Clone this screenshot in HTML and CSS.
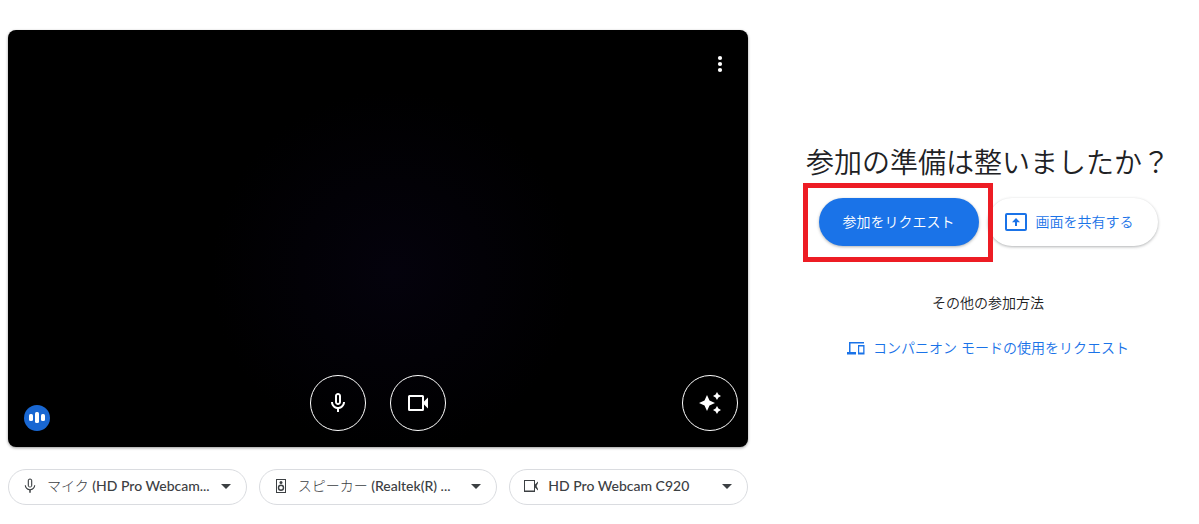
FILE: index.html
```html
<!DOCTYPE html>
<html lang="ja">
<head>
    <meta charset="UTF-8">
    <meta name="viewport" content="width=device-width, initial-scale=1.0">
    <title>参加の準備</title>
    <link rel="stylesheet" href="styles.css">
</head>
<body>
    <main class="lobby">
        <section class="preview">
            <div class="video">
                <div class="video-top">
                    <button type="button" class="more" aria-label="その他のオプション">
                        <svg width="24" height="24" viewBox="0 0 24 24"><circle cx="12" cy="6" r="2.1"/><circle cx="12" cy="12" r="2.1"/><circle cx="12" cy="18" r="2.1"/></svg>
                    </button>
                </div>
                <div class="video-bottom">
                    <div class="level">
                        <svg width="26" height="26" viewBox="0 0 26 26"><rect x="5" y="9" width="4" height="7" rx="1.500"/><rect x="11" y="7" width="4" height="11" rx="1.500"/><rect x="17" y="9" width="4" height="7" rx="1.500"/></svg>
                    </div>
                    <div class="toggles">
                        <button type="button" class="round" aria-label="マイク">
                            <svg width="24" height="24" viewBox="0 0 24 24"><path d="M12 14c1.66 0 3-1.34 3-3V5c0-1.66-1.34-3-3-3S9 3.34 9 5v6c0 1.66 1.34 3 3 3zm-1-9c0-.55.45-1 1-1s1 .45 1 1v6c0 .55-.45 1-1 1s-1-.45-1-1V5zm6 6c0 2.76-2.24 5-5 5s-5-2.24-5-5H5c0 3.53 2.61 6.43 6 6.92V21h2v-3.08c3.39-.49 6-3.39 6-6.92h-2z"/></svg>
                        </button>
                        <button type="button" class="round" aria-label="カメラ">
                            <svg width="24" height="24" viewBox="0 0 24 24"><path d="M18 10.500V5.500a1.500 1.500 0 0 0-1.500-1.500h-13A1.500 1.500 0 0 0 2 5.500v13A1.500 1.500 0 0 0 3.500 20h13a1.500 1.500 0 0 0 1.500-1.500v-5l4 4v-11l-4 4zM16 18H4V6h12v12z"/></svg>
                        </button>
                    </div>
                    <button type="button" class="round effects" aria-label="視覚効果">
                        <svg width="24" height="24" viewBox="0 0 24 24"><path d="M9 4l2.500 5.500L17 12l-5.500 2.500L9 20l-2.500-5.500L1 12l5.500-2.500zM19 1l1.400 2.600L23 5l-2.600 1.400L19 9l-1.400-2.600L15 5l2.600-1.400zM19 15l1.400 2.600L23 19l-2.600 1.400L19 23l-1.400-2.600L15 19l2.600-1.400z"/></svg>
                    </button>
                </div>
            </div>

            <form class="devices">
                <label class="device" for="mic">
                    <svg width="18" height="18" viewBox="0 0 24 24"><path d="M12 14c1.660 0 3-1.340 3-3V5c0-1.660-1.340-3-3-3S9 3.340 9 5v6c0 1.660 1.340 3 3 3zm-1.500-10.500h3v9h-3zM17.500 11c0 3-2.500 5.200-5.500 5.200S6.500 14 6.500 11H5c0 3.500 2.700 6.200 6 6.700V21h2v-3.300c3.300-.5 6-3.200 6-6.700z"/></svg>
                    <select id="mic" aria-label="マイク">
                        <option>マイク (HD Pro Webcam...</option>
                    </select>
                    <svg class="arrow" width="10" height="5" viewBox="0 0 10 5"><path d="M0 0h10L5 5z"/></svg>
                </label>
                <label class="device" for="speaker">
                    <svg width="18" height="18" viewBox="0 0 18 18"><path d="M4 2h10v14H4zM5 3v12h8V3z" fill-rule="evenodd"/><circle cx="9" cy="5.500" r="1.500"/><path d="M9 7.500a3.200 3.200 0 1 0 0 6.400 3.200 3.200 0 0 0 0-6.400zm0 1.400a1.800 1.800 0 1 1 0 3.600 1.800 1.800 0 0 1 0-3.600z" fill-rule="evenodd"/></svg>
                    <select id="speaker" aria-label="スピーカー">
                        <option>スピーカー (Realtek(R) ...</option>
                    </select>
                    <svg class="arrow" width="10" height="5" viewBox="0 0 10 5"><path d="M0 0h10L5 5z"/></svg>
                </label>
                <label class="device" for="camera">
                    <svg width="18" height="18" viewBox="0 0 18 18"><path d="M2 3h11v12H2zM3 4v9.500h9V4zM13 7.500l3-3v1.500l-1.500 3 1.500 3v1.500l-3-3z" fill-rule="evenodd"/></svg>
                    <select id="camera" aria-label="カメラ">
                        <option>HD Pro Webcam C920</option>
                    </select>
                    <svg class="arrow" width="10" height="5" viewBox="0 0 10 5"><path d="M0 0h10L5 5z"/></svg>
                </label>
            </form>
        </section>

        <section class="join">
            <h1>参加の準備は整いましたか？</h1>
            <div class="actions">
                <div class="highlight">
                    <button type="button" class="btn request">参加をリクエスト</button>
                </div>
                <button type="button" class="btn share">
                    <svg width="24" height="24" viewBox="0 0 24 24"><path d="M3 3h18a2 2 0 0 1 2 2v14a2 2 0 0 1-2 2H3a2 2 0 0 1-2-2V5a2 2 0 0 1 2-2zM3 5v14h18V5z" fill-rule="evenodd"/><path d="M12 8l4 4.200h-3V16h-2v-3.800H8z"/></svg>
                    画面を共有する
                </button>
            </div>
            <p class="other">その他の参加方法</p>
            <a href="#" class="companion">
                <svg width="18" height="18" viewBox="0 0 18 18"><path d="M2 3h15v1.500H3.500V13H9v2.500H0V13h2z"/><path d="M11 6h6.500v9.500H11zM12.200 7.500v6h4v-6z" fill-rule="evenodd"/></svg>
                コンパニオン モードの使用をリクエスト
            </a>
        </section>
    </main>
</body>
</html>
```

FILE: styles.css
```css
* {
    box-sizing: border-box;
}

body {
    margin: 0;
    background-color: #fff;
    color: #202124;
    font-family: Lato, "Noto Sans CJK JP", sans-serif;
    font-size: 14px;
    line-height: 20px;
}

button,
select {
    font: inherit;
    cursor: pointer;
}

svg {
    display: block;
    flex: none;
    fill: currentColor;
}

.lobby {
    display: grid;
    grid-template-columns: minmax(0, 740fr) minmax(0, 394fr);
    gap: 43px;
    padding: 30px 14px 16px 8px;
}

.video {
    display: flex;
    flex-direction: column;
    justify-content: space-between;
    aspect-ratio: 740 / 417;
    padding: 16px 10px;
    border-radius: 8px;
    background: #000 radial-gradient(circle at 52% 58%, #04020c, #000 40%);
    color: #fff;
    box-shadow: 0 1px 3px rgba(0, 0, 0, 0.4);
}

.video-top {
    display: flex;
    justify-content: flex-end;
}

.more {
    display: flex;
    padding: 6px;
    border: none;
    background: none;
    color: #fff;
}

.video-bottom {
    display: grid;
    grid-template-columns: 1fr auto 1fr;
    align-items: end;
}

.level {
    width: 26px;
    margin-left: 6px;
    border-radius: 50%;
    background-color: #1967d2;
}

.toggles {
    display: flex;
    gap: 24px;
}

.round {
    display: flex;
    align-items: center;
    justify-content: center;
    width: 56px;
    height: 56px;
    padding: 0;
    border: 1px solid #fff;
    border-radius: 50%;
    background: none;
    color: #fff;
}

.effects {
    justify-self: end;
}

.devices {
    display: grid;
    grid-template-columns: repeat(3, minmax(0, 1fr));
    gap: 12px;
    margin-top: 22px;
}

.device {
    display: flex;
    align-items: center;
    height: 36px;
    padding: 0 15px 2px 12px;
    border: 1px solid #dadce0;
    border-radius: 18px;
    color: #3c4043;
}

.device select {
    flex: 1;
    min-width: 0;
    margin: 0 6px 0 8px;
    padding: 0;
    border: none;
    background: none;
    color: inherit;
    font-family: Lato, "Noto Sans CJK JP Light", "Noto Sans CJK JP", sans-serif;
    font-weight: 500;
    appearance: none;
}

.join {
    display: flex;
    flex-direction: column;
    align-items: center;
    padding-top: 114px;
}

.join h1 {
    margin: 0;
    font-size: 28px;
    font-weight: 350;
    line-height: 36px;
    white-space: nowrap;
}

.actions {
    display: flex;
    gap: 9px;
    margin-top: 18px;
}

.highlight {
    position: relative;
}

.highlight::after {
    content: "";
    position: absolute;
    inset: -15px -14px -16px -16px;
    border: 5px solid #ed1c24;
    pointer-events: none;
    z-index: 1;
}

.btn {
    display: flex;
    align-items: center;
    gap: 8px;
    height: 48px;
    padding: 0 24px;
    border: none;
    border-radius: 24px;
    font-weight: 350;
    white-space: nowrap;
    box-shadow: 0 1px 3px rgba(60, 64, 67, 0.4);
}

.request {
    background-color: #1a73e8;
    color: #fff;
}

.share {
    padding-left: 16px;
    background-color: #fff;
    color: #1a73e8;
}

.other {
    margin: 47px 0 25px;
    font-weight: 350;
}

.companion {
    display: flex;
    align-items: center;
    gap: 8px;
    color: #1a73e8;
    font-weight: 350;
    text-decoration: none;
    white-space: nowrap;
}
```
